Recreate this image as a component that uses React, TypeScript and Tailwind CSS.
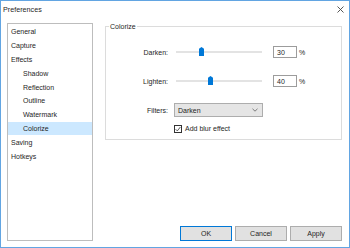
import React from "react"

const items = [
  { label: "General", sub: false },
  { label: "Capture", sub: false },
  { label: "Effects", sub: false },
  { label: "Shadow", sub: true },
  { label: "Reflection", sub: true },
  { label: "Outline", sub: true },
  { label: "Watermark", sub: true },
  { label: "Colorize", sub: true, active: true },
  { label: "Saving", sub: false },
  { label: "Hotkeys", sub: false },
]

function SliderRow({ label, value, className = "" }: { label: string; value: number; className?: string }) {
  return (
    <div className={`flex h-[12px] items-center ${className}`}>
      <span className="w-[62px] text-right">{label}</span>
      <div className="relative ml-[8px] h-[12px] w-[86px]">
        <div className="absolute left-0 right-0 top-[5px] h-[2px] bg-[#e3e3e3]" />
        <svg
          className="absolute top-[1px]"
          style={{ left: `calc(${value}% - 2.5px)` }}
          width="5"
          height="9"
          viewBox="0 0 5 9"
        >
          <polygon points="0,1.8 2.5,0 5,1.8 5,9 0,9" fill="#0078d7" />
        </svg>
      </div>
      <div className="ml-[11px] flex h-[12px] w-[24px] items-center border border-[#9c9c9c] pl-[3px]">{value}</div>
      <span className="ml-[2px]">%</span>
    </div>
  )
}

export default function App() {
  return (
    <div
      className="flex h-[248px] w-[350px] flex-col border border-[#62a5e2] bg-white text-[7px] leading-[9px] text-[#1e1e1e]"
      style={{ fontFamily: "'Liberation Sans', Arial, sans-serif" }}
    >
      {/* title bar */}
      <div className="flex h-[17px] items-center justify-between pl-[2px] pr-[5px]">
        <span className="text-[7.2px]">Preferences</span>
        <svg width="7" height="7" viewBox="0 0 7 7" className="mt-[-1px]">
          <path d="M0.5 0.5 L6.5 6.5 M6.5 0.5 L0.5 6.5" stroke="#444" strokeWidth="0.9" />
        </svg>
      </div>

      <div className="flex min-h-0 flex-1 pb-[6px] pl-[6px] pr-[7px] pt-[5px]">
        {/* tree list */}
        <div className="w-[86px] border border-[#bdbdbd] pt-[1px]">
          {items.map((it) => (
            <div
              key={it.label}
              className={`flex h-[13.8px] items-center ${it.sub ? "pl-[15px]" : "pl-[3px]"} ${it.active ? "bg-[#cce8ff]" : ""}`}
            >
              {it.label}
            </div>
          ))}
        </div>

        {/* right side */}
        <div className="ml-[12px] flex flex-1 flex-col">
          <div className="relative mt-[3px] h-[114px] border border-[#dcdcdc]">
            <span className="absolute left-[3px] top-[-5px] bg-white px-[1px]">Colorize</span>
            <div className="flex flex-col pt-[19px]">
              <SliderRow label="Darken:" value={30} />
              <SliderRow label="Lighten:" value={40} className="mt-[17px]" />
              <div className="mt-[16px] flex h-[14px] items-center">
                <span className="w-[62px] text-right">Filters:</span>
                <div className="ml-[6px] flex h-[14px] w-[89px] items-center justify-between border border-[#adadad] bg-[#e5e5e5] pl-[3px] pr-[4px]">
                  <span>Darken</span>
                  <svg width="6" height="4" viewBox="0 0 6 4">
                    <path d="M0.5 0.8 L3 3.2 L5.5 0.8" fill="none" stroke="#606060" strokeWidth="0.8" />
                  </svg>
                </div>
              </div>
              <div className="ml-[68px] mt-[7px] flex h-[9px] items-center">
                <div className="flex h-[8px] w-[8px] items-center justify-center border border-[#333]">
                  <svg width="6" height="6" viewBox="0 0 6 6">
                    <path d="M0.6 3.2 L2.3 4.9 L5.4 1" fill="none" stroke="#333" strokeWidth="0.8" />
                  </svg>
                </div>
                <span className="ml-[3px]">Add blur effect</span>
              </div>
            </div>
          </div>

          {/* buttons */}
          <div className="mt-auto flex justify-end gap-[3px]">
            <button className="h-[15px] w-[52px] border border-[#0078d7] bg-[#e1e1e1] text-[7px]">OK</button>
            <button className="h-[15px] w-[52px] border border-[#adadad] bg-[#e1e1e1] text-[7px]">Cancel</button>
            <button className="h-[15px] w-[52px] border border-[#adadad] bg-[#e1e1e1] text-[7px]">Apply</button>
          </div>
        </div>
      </div>
    </div>
  )
}
